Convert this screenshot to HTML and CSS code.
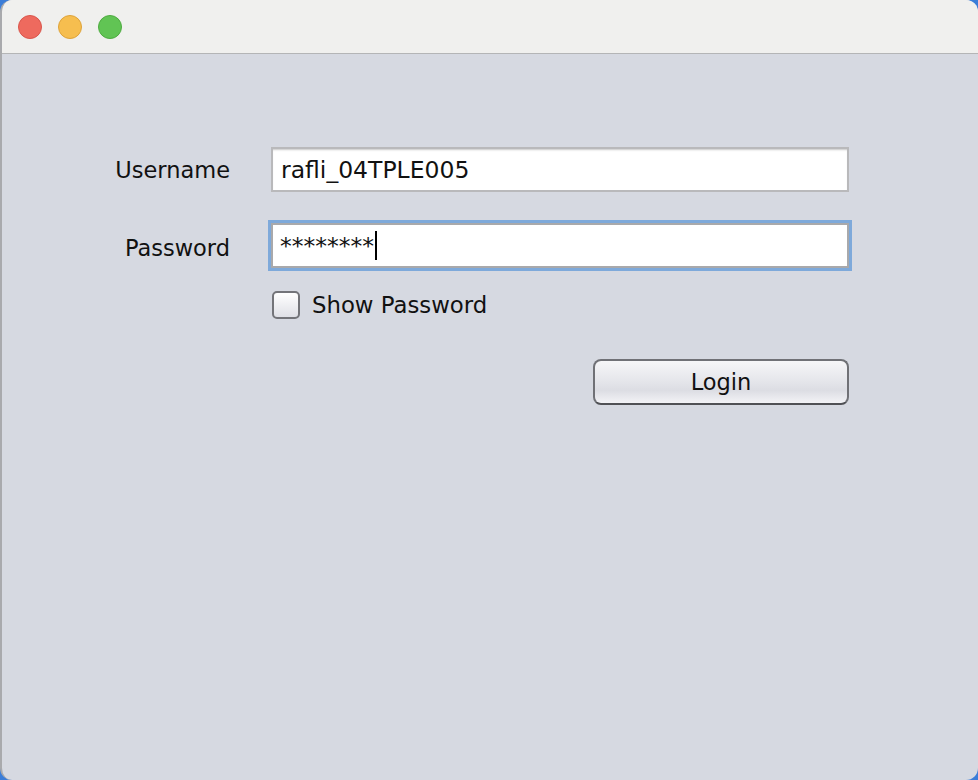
FILE: index.html
```html
<!DOCTYPE html>
<html>
<head>
<meta charset="utf-8">
<link rel="stylesheet" href="styles.css">
<title>Login</title>
</head>
<body>
<div class="window">
  <div class="titlebar">
    <span class="light red"></span>
    <span class="light yellow"></span>
    <span class="light green"></span>
  </div>
  <div class="content">
    <div class="row row-user">
      <label class="label">Username</label>
      <div class="field">rafli_04TPLE005</div>
    </div>
    <div class="row row-pass">
      <label class="label">Password</label>
      <div class="field focused"><span class="stars">********</span><span class="caret"></span></div>
    </div>
    <div class="row row-check">
      <span class="label"></span>
      <div class="check"><span class="checkbox"></span><span class="check-label">Show Password</span></div>
    </div>
    <div class="row row-btn">
      <span class="label"></span>
      <div class="btn-wrap"><button class="btn">Login</button></div>
    </div>
  </div>
</div>
</body>
</html>
```

FILE: styles.css
```css
html, body {
  margin: 0;
  padding: 0;
  width: 978px;
  height: 780px;
  overflow: hidden;
  background: #3b7dd8;
}
body {
  font-family: "DejaVu Sans", "Liberation Sans", sans-serif;
  color: #111;
}
.window {
  width: 978px;
  height: 780px;
  border-radius: 12px;
  overflow: hidden;
  background: #d6d9e1;
  display: flex;
  flex-direction: column;
  box-sizing: border-box;
  border-left: 2px solid #a9aaad;
}
.titlebar {
  height: 53px;
  background: #f0f0ee;
  border-bottom: 1px solid #b4b5b6;
  display: flex;
  align-items: center;
  gap: 16px;
  padding-left: 16px;
  flex-shrink: 0;
}
.light {
  width: 24px;
  height: 24px;
  border-radius: 50%;
  box-sizing: border-box;
}
.red { background: #ee6a5e; border: 1px solid #d9564c; }
.yellow { background: #f6be4f; border: 1px solid #dea33a; }
.green { background: #61c454; border: 1px solid #4eab40; }
.content {
  flex: 1;
  padding-top: 93px;
  display: flex;
  flex-direction: column;
}
.row {
  display: flex;
  align-items: center;
  gap: 41px;
}
.label {
  width: 228px;
  height: 45px;
  flex-shrink: 0;
  text-align: right;
  font-size: 22.5px;
  line-height: 45px;
  box-sizing: border-box;
}
.row-user .label { padding-top: 1px; line-height: 44px; }
.row-pass { margin-top: 31px; }
.row-pass .label { padding-top: 5px; line-height: 40px; }
.row-check { margin-top: 23px; }
.row-check .label, .row-btn .label { height: 1px; line-height: 1px; padding: 0; }
.row-btn { margin-top: 40px; }
.field {
  width: 578px;
  height: 45px;
  box-sizing: border-box;
  background: #fff;
  border: 2px solid #b9b9bb;
  box-shadow: inset 0 2px 2px -1px #c8c8c8;
  font-size: 23.5px;
  padding-left: 8px;
  display: flex;
  align-items: center;
}
.focused {
  border: 2px solid #a9a9ab;
  box-shadow: 0 0 0 3px #7ea9da;
  padding-left: 7px;
}
.stars {
  letter-spacing: 0;
  font-size: 23.5px;
}
.caret {
  display: inline-block;
  width: 2px;
  height: 29px;
  background: #000;
  margin-left: 1px;
}
.check {
  display: flex;
  align-items: center;
  gap: 12px;
  margin-left: 1px;
}
.checkbox {
  width: 28px;
  height: 28px;
  box-sizing: border-box;
  border: 2px solid #737479;
  border-radius: 5px;
  background: linear-gradient(#ffffff, #dfe0e6);
}
.check-label {
  font-size: 22.8px;
  line-height: 28px;
}
.btn-wrap {
  width: 578px;
  display: flex;
  justify-content: flex-end;
}
.btn {
  width: 256px;
  height: 46px;
  border-radius: 8px;
  border: 2px solid #707176;
  border-bottom-color: #505155;
  background: linear-gradient(#f6f6f8 0%, #e4e5ea 50%, #dcdde3 70%, #f3f3f6 100%);
  font-family: "DejaVu Sans", "Liberation Sans", sans-serif;
  font-size: 22.5px;
  color: #111;
  padding: 0;
}
```
